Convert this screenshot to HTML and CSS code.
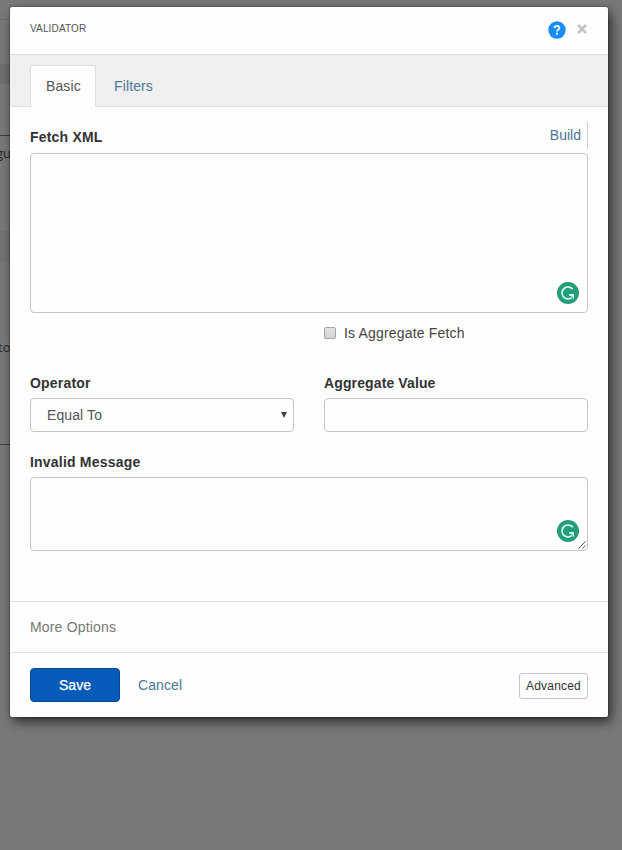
FILE: index.html
```
<!DOCTYPE html>
<html lang="en">
<head>
<meta charset="utf-8">
<title>Validator</title>
<link rel="stylesheet" href="styles.css">
</head>
<body>
<div class="backdrop" aria-hidden="true">
  <span class="line line-top"></span>
  <span class="band"></span>
  <span class="band band-low"></span>
  <span class="line line-mid"></span>
  <span class="peek peek-one">gu</span>
  <span class="peek peek-two">to</span>
  <span class="line line-low"></span>
</div>
<main class="modal">
  <header class="head">
    <h1>VALIDATOR</h1>
    <svg class="help" viewBox="0 0 18 18"><circle cx="9" cy="9" r="8.7" fill="#188cfa"/><path d="M6.6 7.1C6.6 4.2 11.5 4.2 11.4 7C11.4 8.7 9 8.6 9 10.5" fill="none" stroke="#fff" stroke-width="1.8"/><rect x="8" y="11.7" width="2" height="2" fill="#fff"/></svg>
    <svg class="close" viewBox="0 0 10 10"><path d="M1 1L9 9M9 1L1 9" stroke="#c4c4c4" stroke-width="2.5"/></svg>
  </header>
  <nav class="tabs">
    <a class="tab active">Basic</a>
    <a class="tab">Filters</a>
  </nav>
  <section class="form">
    <div class="label-row"><label>Fetch XML</label><a class="build">Build</a></div>
    <div class="field fetch">
      <svg class="badge" viewBox="0 0 22 22"><circle cx="11" cy="11" r="11" fill="#259e77"/><path d="M15.8 7.3A6 6 0 1 0 14.8 15.7M12 12.9H16.6" fill="none" stroke="#d5fff1" stroke-width="1.7"/><path d="M12.3 12H17V17.2L15.4 15.2Z" fill="#d5fff1"/></svg>
    </div>
    <div class="check-row"><span class="check"></span><span>Is Aggregate Fetch</span></div>
    <div class="columns">
      <div><label>Operator</label><div class="field select"><span>Equal To</span><svg class="arrow" viewBox="0 0 6 6"><path d="M0 0H6L3 6Z" fill="#444"/></svg></div></div>
      <div><label>Aggregate Value</label><div class="field input"></div></div>
    </div>
    <label class="message-label">Invalid Message</label>
    <div class="field message">
      <svg class="badge" viewBox="0 0 22 22"><circle cx="11" cy="11" r="11" fill="#259e77"/><path d="M15.8 7.3A6 6 0 1 0 14.8 15.7M12 12.9H16.6" fill="none" stroke="#d5fff1" stroke-width="1.7"/><path d="M12.3 12H17V17.2L15.4 15.2Z" fill="#d5fff1"/></svg>
      <svg class="grip" viewBox="0 0 8 8"><path d="M0.5 7.5L7.5 .5M4.5 7.5L7.5 4.5" stroke="#555" stroke-width="1"/></svg>
    </div>
  </section>
  <div class="more">More Options</div>
  <footer class="foot">
    <a class="save">Save</a><a class="cancel">Cancel</a><a class="advanced">Advanced</a>
  </footer>
</main>
</body>
</html>
```

FILE: styles.css
```
* { box-sizing: border-box; }
body {
  margin: 0;
  height: 850px;
  padding: 7px 14px 0 10px;
  overflow: hidden;
  position: relative;
  background: #797979;
  font: 14px/20px "Liberation Sans", Arial, sans-serif;
  color: #444;
}
.backdrop { position: absolute; inset: 0; }
.backdrop span { position: absolute; left: 0; }
.line { width: 10px; height: 1px; background: #3c3c3c; }
.line-top { top: 19px; width: 8px; background: #6c6c6c; }
.line-mid { top: 135px; }
.line-low { top: 444px; }
.band { top: 64px; width: 10px; height: 20px; background: #6e6e6e; }
.band-low { top: 231px; height: 31px; background: #737373; }
.peek { font: 13px/20px "Open Sans", sans-serif; color: #252525; }
.backdrop .peek-one { top: 143px; left: -4px; }
.backdrop .peek-two { top: 337px; left: -2px; }
.modal {
  position: relative;
  height: 710px;
  display: flex;
  flex-direction: column;
  background: #fefefe;
  border-radius: 2px;
  box-shadow: 0 0 2px rgba(0,0,0,.65), 3px 5px 12px rgba(0,0,0,.65);
}
.head { height: 48px; display: flex; align-items: center; padding: 0 21px 2px 20px; border-bottom: 1px solid #e2e2e2; }
h1 { margin: 0 auto 0 0; padding-bottom: 1px; font-size: 10px; line-height: 14px; font-weight: 400; letter-spacing: .15px; color: #555; }
.help { width: 18px; height: 18px; }
.close { width: 10px; height: 10px; margin: 0 0 2px 11px; }
.tabs { height: 52px; display: flex; align-items: flex-end; padding: 0 20px; background: #efefef; border-bottom: 1px solid #e0e0e0; }
.tab { height: 41px; padding: 11px 18px 0; color: #4d7897; letter-spacing: .12px; }
.tab.active { height: 42px; width: 66px; margin-bottom: -1px; padding: 10px 0 0 15px; background: #fefefe; border: 1px solid #dedede; border-bottom: 0; border-radius: 3px 3px 0 0; color: #555; }
.form { height: 494px; padding: 14px 20px 0; }
label { display: block; height: 25px; padding-top: 5px; line-height: 20px; font-weight: 700; letter-spacing: .2px; color: #333; }
.label-row { display: flex; justify-content: space-between; height: 32px; }
.label-row label { padding-top: 6px; }
.build { height: 28px; padding: 4px 6px 0 0; color: #4d7296; border-right: 1px solid #ccc; border-radius: 0 4px 0 0; }
.field { position: relative; background: #fefefe; border: 1px solid #c4c4c4; border-radius: 4px; }
.fetch { height: 160px; }
.badge { position: absolute; width: 22px; height: 22px; right: 8px; bottom: 8px; }
.check-row { display: flex; align-items: center; gap: 8px; height: 20px; margin: 10px 0 25px 294px; letter-spacing: .18px; }
.check { width: 12px; height: 12px; border: 1px solid #a5a5a5; border-radius: 2px; background: linear-gradient(#e5e2e2, #d7d4d4); }
.columns { display: grid; grid-template-columns: 1fr 1fr; gap: 30px; margin-bottom: 20px; }
.columns label { height: 30px; }
.columns div + div label { letter-spacing: .12px; }
.message-label { padding-top: 0; }
.input, .select { height: 34px; }
.select { display: flex; align-items: center; justify-content: space-between; padding: 0 6px 0 16px; color: #555; letter-spacing: .1px; }
.arrow { width: 6px; height: 6px; }
.message { height: 74px; }
.grip { position: absolute; width: 8px; height: 8px; right: 1px; bottom: 1px; }
.more { height: 52px; padding: 15px 20px; border-top: 1px solid #e2e2e2; border-bottom: 1px solid #e2e2e2; color: #777; letter-spacing: .17px; }
.foot { display: flex; align-items: center; height: 64px; padding: 0 20px; }
.save { width: 90px; height: 34px; background: #075ab7; border: 1px solid #064b99; border-radius: 4px; color: #fff; text-align: center; line-height: 32px; -webkit-text-stroke: .25px #fff; }
.cancel { margin-left: 18px; color: #4d7897; letter-spacing: .1px; }
.advanced { margin: 2px 0 0 auto; width: 69px; height: 26px; border: 1px solid #c4c4c4; border-radius: 3px; text-align: center; font-size: 12px; line-height: 24px; letter-spacing: .2px; color: #333; }
```
